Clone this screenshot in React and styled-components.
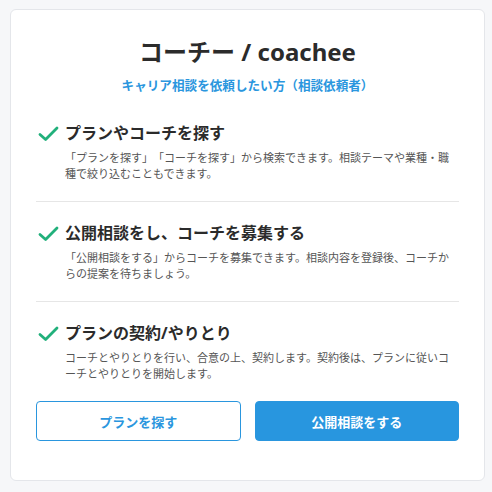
import React from 'react'
import styled, { createGlobalStyle } from 'styled-components'

const GlobalStyle = createGlobalStyle`
  html, body {
    margin: 0;
    background: #f6f7f9;
  }
  body {
    padding: 9px 7px 0 10px;
    font-family: "Noto Sans", "Noto Sans CJK JP", sans-serif;
    text-spacing-trim: space-all;
  }
`

const Card = styled.div`
  background: #fff;
  border: 1px solid #e4e6ea;
  border-radius: 6px;
  padding: 25px 25px 39px;
`

const Title = styled.h1`
  margin: 0;
  text-align: center;
  font-size: 24px;
  line-height: 34px;
  font-weight: 700;
  color: #2b2b2b;
`

const Subtitle = styled.p`
  margin: 8px 0 7px;
  text-align: center;
  font-size: 12.6px;
  line-height: 18px;
  font-weight: 700;
  color: #2a96de;
`

const Step = styled.div`
  display: grid;
  grid-template-columns: 24px 1fr;
  column-gap: 5px;
  padding: 19px 0;
  border-bottom: ${p => (p.last ? 'none' : '1px solid #e6e6e6')};
`

const StepTitle = styled.h2`
  margin: 0;
  font-size: 16px;
  line-height: 24px;
  font-weight: 700;
  color: #2b2b2b;
`

const StepText = styled.p`
  grid-column: 2;
  margin: 5px 0 0;
  font-size: 11px;
  line-height: 16px;
  color: #555;
`

const Buttons = styled.div`
  display: grid;
  grid-template-columns: 1fr 1fr;
  gap: 14px;
`

const Button = styled.button`
  height: 40px;
  border-radius: 4px;
  border: 1px solid #2a96de;
  background: ${p => (p.primary ? '#2896df' : '#fff')};
  color: ${p => (p.primary ? '#fff' : '#2a96de')};
  font-family: inherit;
  font-size: 13px;
  font-weight: 700;
  cursor: pointer;
`

const Check = () => (
  <svg width="24" height="24" viewBox="0 0 24 24" fill="none">
    <path d="M4 13.5 L9.6 18.5 L21 7" stroke="#21b07b" strokeWidth="2.8" strokeLinecap="round" strokeLinejoin="round" />
  </svg>
)

const steps = [
  {
    title: 'プランやコーチを探す',
    text: '「プランを探す」「コーチを探す」から検索できます。相談テーマや業種・職種で絞り込むこともできます。',
  },
  {
    title: '公開相談をし、コーチを募集する',
    text: '「公開相談をする」からコーチを募集できます。相談内容を登録後、コーチからの提案を待ちましょう。',
  },
  {
    title: 'プランの契約/やりとり',
    text: 'コーチとやりとりを行い、合意の上、契約します。契約後は、プランに従いコーチとやりとりを開始します。',
  },
]

export default function App() {
  return (
    <>
      <GlobalStyle />
      <Card>
        <Title>コーチー / coachee</Title>
        <Subtitle>キャリア相談を依頼したい方（相談依頼者）</Subtitle>
        {steps.map((s, i) => (
          <Step key={s.title} last={i === steps.length - 1}>
            <Check />
            <StepTitle>{s.title}</StepTitle>
            <StepText>{s.text}</StepText>
          </Step>
        ))}
        <Buttons>
          <Button>プランを探す</Button>
          <Button primary>公開相談をする</Button>
        </Buttons>
      </Card>
    </>
  )
}
